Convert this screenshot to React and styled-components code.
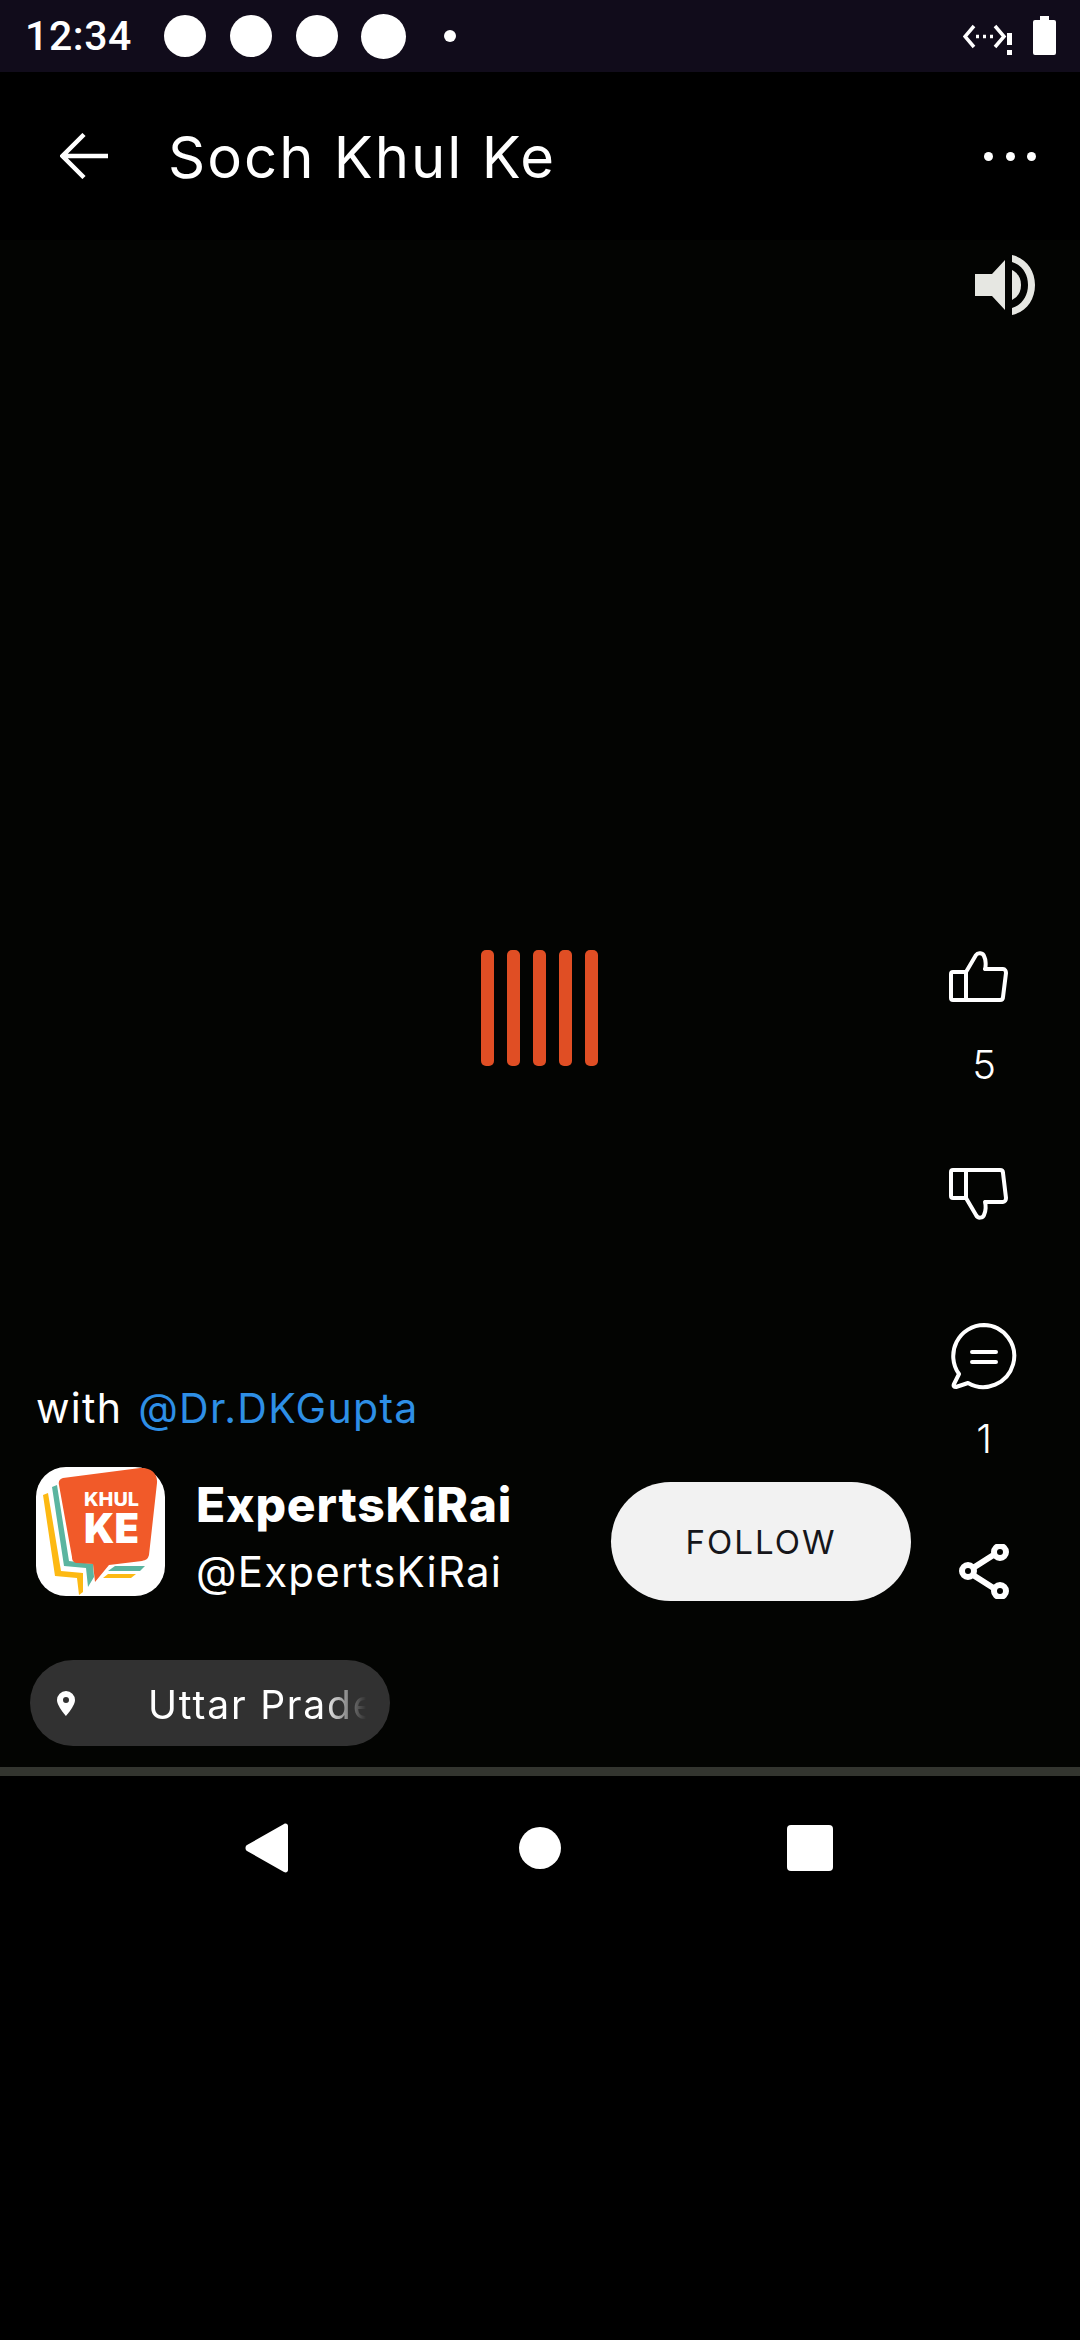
import React from 'react'
import styled, { createGlobalStyle } from 'styled-components'

const GlobalStyle = createGlobalStyle`
  html, body {
    margin: 0;
    padding: 0;
    background: #000;
  }
  * {
    box-sizing: border-box;
  }
`

const Screen = styled.div`
  width: 1080px;
  height: 2340px;
  display: flex;
  flex-direction: column;
  background: #000;
  color: #fff;
  font-family: Inter, "Noto Sans", sans-serif;
  overflow: hidden;
`

const StatusBar = styled.div`
  height: 72px;
  flex: none;
  display: flex;
  align-items: center;
  padding: 0 24px 0 25px;
  background: #110c1b;
`

const Clock = styled.span`
  width: 139px;
  font-family: Roboto, sans-serif;
  font-size: 41px;
  font-weight: 500;
  letter-spacing: 0.6px;
  line-height: 72px;
`

const Notifications = styled.div`
  display: flex;
  align-items: center;
  gap: 24px;
`

const Dot = styled.span`
  display: block;
  width: ${(p) => p.$size}px;
  height: ${(p) => p.$size}px;
  margin-left: ${(p) => p.$offset || 0}px;
  border-radius: 50%;
  background: #fff;
`

const StatusRight = styled.div`
  margin-left: auto;
  display: flex;
  align-items: flex-start;
  gap: 20px;
  height: 72px;
`

const Header = styled.header`
  height: 168px;
  flex: none;
  display: flex;
  align-items: center;
  padding: 0 44px 0 60px;
`

const Title = styled.h1`
  margin: 2px 0 0 60px;
  font-size: 58px;
  font-weight: 400;
  letter-spacing: 2px;
  line-height: 68px;
`

const MoreDots = styled.div`
  margin-left: auto;
  display: flex;
  gap: 12.5px;
`

const MoreDot = styled.span`
  width: 9px;
  height: 9px;
  border-radius: 50%;
  background: #fff;
`

const Video = styled.section`
  position: relative;
  height: 1527px;
  flex: none;
  display: flex;
  flex-direction: column;
  background: #030402;
`

const SoundRow = styled.div`
  display: flex;
  justify-content: flex-end;
  padding: 15px 45px 0 0;
`

const Loader = styled.div`
  position: absolute;
  left: 481px;
  top: 710px;
  display: flex;
  gap: 13px;
`

const LoaderBar = styled.span`
  width: 13px;
  height: 116px;
  border-radius: 5px;
  background: #e04e24;
`

const Body = styled.div`
  flex: 1;
  display: flex;
  align-items: flex-end;
  padding-bottom: 21px;
`

const Main = styled.div`
  flex: 1;
  min-width: 0;
  padding-left: 30px;
`

const WithLine = styled.p`
  margin: 0 0 35px 6px;
  font-size: 41px;
  font-weight: 400;
  letter-spacing: 1.3px;
  word-spacing: 3px;
  line-height: 48px;
`

const Mention = styled.span`
  color: #2e8fe6;
`

const ProfileRow = styled.div`
  display: flex;
  align-items: flex-start;
  padding: 0 19px 0 6px;
`

const Logo = styled.svg`
  display: block;
  flex: none;
  width: 129px;
  height: 129px;
`

const ProfileText = styled.div`
  margin-left: 31px;
  padding-top: 10px;
`

const ProfileName = styled.div`
  font-size: 48px;
  font-weight: 800;
  letter-spacing: 0.8px;
  line-height: 56px;
`

const ProfileHandle = styled.div`
  margin-top: 15px;
  font-size: 42px;
  font-weight: 400;
  letter-spacing: 1.2px;
  line-height: 48px;
`

const FollowButton = styled.button`
  width: 300px;
  height: 119px;
  margin: 15px 0 0 auto;
  border: 0;
  border-radius: 60px;
  background: #f2f2f2;
  color: #16161a;
  font-family: inherit;
  font-size: 33px;
  font-weight: 400;
  letter-spacing: 2px;
`

const LocationPill = styled.div`
  width: 360px;
  height: 86px;
  margin-top: 59px;
  display: flex;
  align-items: center;
  padding-left: 27px;
  border-radius: 43px;
  background: #313131;
`

const LocationText = styled.span`
  width: 218px;
  margin: 3px 0 0 73px;
  overflow: hidden;
  white-space: nowrap;
  font-size: 39px;
  font-weight: 400;
  letter-spacing: 1.8px;
  line-height: 46px;
  mask-image: linear-gradient(to right, #000 80%, transparent 100%);
`

const Rail = styled.aside`
  width: 108px;
  flex: none;
  margin: 0 42px 147px 0;
  display: flex;
  flex-direction: column;
  align-items: center;
`

const RailIcon = styled.svg`
  display: block;
  margin-top: ${(p) => p.$top || 0}px;
`

const RailCount = styled.span`
  margin-top: ${(p) => p.$top}px;
  font-size: 40px;
  font-weight: 300;
  line-height: 40px;
`

const Divider = styled.div`
  height: 9px;
  flex: none;
  background: #33352f;
`

const NavBar = styled.nav`
  display: flex;
  align-items: center;
  height: 144px;
  padding-left: 245px;
`

const NavBack = styled.svg`
  display: block;
  width: 44px;
  height: 50px;
`

const NavHome = styled.span`
  width: 42px;
  height: 42px;
  margin-left: 230px;
  border-radius: 50%;
  background: #fff;
`

const NavRecent = styled.span`
  width: 46px;
  height: 46px;
  margin-left: 226px;
  border-radius: 4px;
  background: #fff;
`

const App = () => {
  return (
    <>
      <GlobalStyle />
      <Screen>
        <StatusBar>
          <Clock>12:34</Clock>
          <Notifications>
            <Dot $size={42} />
            <Dot $size={42} />
            <Dot $size={42} />
            <Dot $size={45} $offset={-1} />
            <Dot $size={12} $offset={14} />
          </Notifications>
          <StatusRight>
            <svg width="50" height="72" viewBox="0 0 50 72" fill="none">
              <path d="M11 26 2 36.5 11 47M32 26 41 36.5 32 47" stroke="#fff" strokeWidth="3.5" />
              <path d="M13 36.5h3M20 36.5h3M27 36.5h3" stroke="#fff" strokeWidth="3.5" />
              <path d="M44 33h5v12h-5zM44 50h5v5h-5z" fill="#fff" />
            </svg>
            <svg width="23" height="72" viewBox="0 0 23 72">
              <path d="M7 16h9v4h5a2 2 0 0 1 2 2v31a2 2 0 0 1-2 2H2a2 2 0 0 1-2-2V22a2 2 0 0 1 2-2h5z" fill="#fff" />
            </svg>
          </StatusRight>
        </StatusBar>

        <Header>
          <svg width="48" height="46" viewBox="0 0 48 46" fill="none">
            <path d="M24 1.5 2.5 23 24 44.5M2.5 23H48" stroke="#fff" strokeWidth="4.5" />
          </svg>
          <Title>Soch Khul Ke</Title>
          <MoreDots>
            <MoreDot />
            <MoreDot />
            <MoreDot />
          </MoreDots>
        </Header>

        <Video>
          <SoundRow>
            <svg width="60" height="60" viewBox="0 0 60 60" fill="#e6e7e2">
              <path d="M0 19h17L30 5v50L17 41H0z" />
              <path d="M37 15c6 3 9 8 9 15s-3 12-9 15z" />
              <path d="M37 0c14 3 23 15 23 30S51 57 37 60v-7c10-3 16-12 16-23S47 10 37 7z" />
            </svg>
          </SoundRow>

          <Loader>
            <LoaderBar />
            <LoaderBar />
            <LoaderBar />
            <LoaderBar />
            <LoaderBar />
          </Loader>

          <Body>
            <Main>
              <WithLine>
                with <Mention>@Dr.DKGupta</Mention>
              </WithLine>
              <ProfileRow>
                <Logo viewBox="0 0 129 129">
                  <rect width="129" height="129" rx="30" fill="#fff" />
                  <path d="M7 28 12 26 25 104 47 106 47 125 43 128 41 111 19 109z" fill="#fdb913" />
                  <path d="M16 20 21 18 33 94 57 97 58 110 52 120 50 101 28 99z" fill="#5bb5a0" />
                  <path d="M79 99H109L104 104H72z" fill="#5bb5a0" />
                  <path d="M72 107H100L95 111H67z" fill="#fdb913" />
                  <path d="M27 11 104 1C114 0 122 6 121 16L113 88C112 92 110 93 106 94L73 98 59 115 57 97 42 96C38 96 36 94 36 90L23 18C22 14 24 12 27 11z" fill="#f15a29" />
                  <text x="48" y="39" fill="#fff" fontFamily="Inter, sans-serif" fontSize="19" fontWeight="800" textLength="55" lengthAdjust="spacingAndGlyphs">KHUL</text>
                  <text x="48" y="76" fill="#fff" fontFamily="Inter, sans-serif" fontSize="41" fontWeight="900" textLength="55" lengthAdjust="spacingAndGlyphs">KE</text>
                </Logo>
                <ProfileText>
                  <ProfileName>ExpertsKiRai</ProfileName>
                  <ProfileHandle>@ExpertsKiRai</ProfileHandle>
                </ProfileText>
                <FollowButton>FOLLOW</FollowButton>
              </ProfileRow>
              <LocationPill>
                <svg width="18" height="25" viewBox="0 0 18 25">
                  <path fillRule="evenodd" d="M9 0a9 9 0 0 1 9 9c0 6-9 16-9 16S0 15 0 9a9 9 0 0 1 9-9zm0 6a3 3 0 1 0 0 6 3 3 0 0 0 0-6z" fill="#fff" />
                </svg>
                <LocationText>Uttar Pradesh</LocationText>
              </LocationPill>
            </Main>

            <Rail>
              <RailIcon width="70" height="51" viewBox="0 0 70 51" fill="none" stroke="#fff" strokeWidth="4" strokeLinejoin="round">
                <path d="M2 23a2 2 0 0 1 2-2h13v28H4a2 2 0 0 1-2-2zM17 21 27 4c2-3 7-2 8 1 2 4 2 10 1 13h18c2 0 3 2 3 4l-3 24c0 2-1 3-3 3H17z" />
              </RailIcon>
              <RailCount $top={43}>5</RailCount>
              <RailIcon $top={83} width="70" height="53" viewBox="0 0 70 53" fill="none" stroke="#fff" strokeWidth="4" strokeLinejoin="round">
                <path d="M2 28a2 2 0 0 0 2 2h13V2H4a2 2 0 0 0-2 2zM17 30 27 47c2 4 7 3 8 0 2-4 2-10 1-13h18c2 0 3-2 3-4L54 5c0-2-1-3-3-3H17z" />
              </RailIcon>
              <RailIcon $top={102} width="66" height="67" viewBox="0 0 66 67" fill="none" stroke="#fff" strokeWidth="4" strokeLinejoin="round" strokeLinecap="round">
                <path d="M33 2a31 31 0 1 1-16 58L5 64c-2 0-3-1-2-3l5-10A31 31 0 0 1 33 2z" />
                <path d="M21 29h24M21 39h24" />
              </RailIcon>
              <RailCount $top={29}>1</RailCount>
              <RailIcon $top={85} width="50" height="55" viewBox="0 0 50 55" fill="none" stroke="#fff" strokeWidth="6">
                <path d="M14 24 36 10M14 31 36 45" />
                <circle cx="9" cy="27" r="6" />
                <circle cx="41" cy="8" r="6" />
                <circle cx="41" cy="47" r="6" />
              </RailIcon>
            </Rail>
          </Body>
        </Video>

        <Divider />

        <NavBar>
          <NavBack viewBox="0 0 44 50">
            <path d="M2 22 39 1c2-1 4 0 4 2v44c0 2-2 3-4 2L2 28c-2-1-2-5 0-6z" fill="#fff" />
          </NavBack>
          <NavHome />
          <NavRecent />
        </NavBar>
      </Screen>
    </>
  )
}

export default App
